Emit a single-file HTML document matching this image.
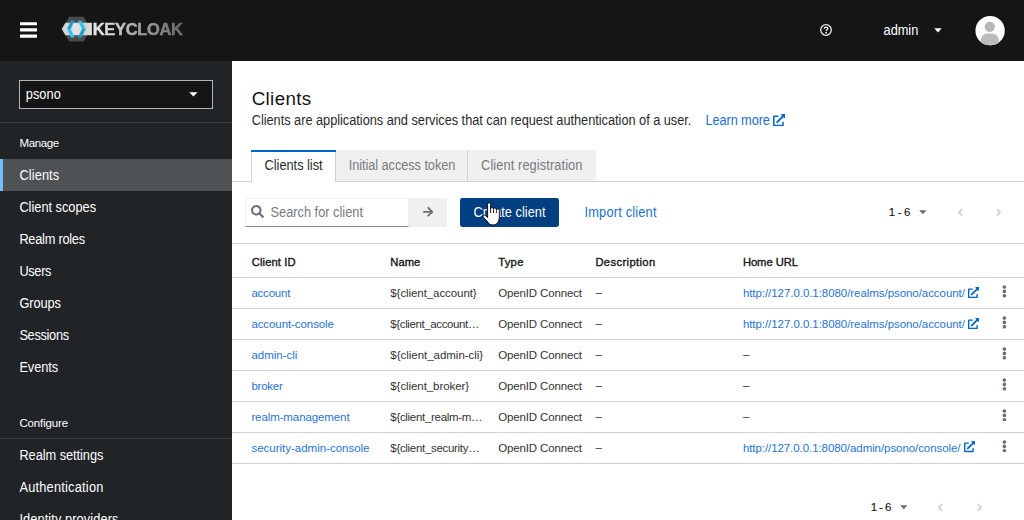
<!DOCTYPE html>
<html lang="en">
<head>
<meta charset="utf-8">
<title>Keycloak Administration Console</title>
<style>
html,body{margin:0;padding:0;}
body{width:1024px;height:520px;overflow:hidden;background:#fff;position:relative;font-family:"Liberation Sans",sans-serif;}
.abs,.t,svg{position:absolute;}
.t{white-space:pre;font-family:"Liberation Sans",sans-serif;}
#header{left:0;top:0;width:1024px;height:60.8px;background:#151515;}
#sidebar{left:0;top:60.8px;width:232px;height:460px;background:#212427;}
#realm{left:19px;top:80px;width:192px;height:26.5px;border:1px solid #b4b4b4;background:#151515;}
.hr{height:1px;background:#3c3f42;left:0;width:232px;}
#cur{left:0;top:158.7px;width:232px;height:31.9px;background:#4f5255;}
#curbar{left:0;top:158.8px;width:3.2px;height:31.8px;background:#73bcf7;}
.line{left:232px;width:792px;height:1px;background:#d2d2d2;}
.tab{top:150.4px;height:30.6px;background:#f0f0f0;box-sizing:border-box;border-right:1px solid #d2d2d2;}
</style>
</head>
<body>
<div id="header" class="abs"></div>
<div id="sidebar" class="abs"></div>
<div id="realm" class="abs"></div>
<div class="abs hr" style="top:122px"></div>
<div class="abs hr" style="top:437.6px"></div>
<div id="cur" class="abs"></div>
<div id="curbar" class="abs"></div>

<!-- hamburger -->
<svg style="left:20px;top:22px" width="17" height="17" viewBox="0 0 17 17"><g fill="#fff"><rect x="0" y="0.2" width="17" height="3.1" rx="0.5"/><rect x="0" y="6.3" width="17" height="3.1" rx="0.5"/><rect x="0" y="12.6" width="17" height="3.1" rx="0.5"/></g></svg>

<!-- logo -->
<svg style="left:58px;top:12px;will-change:transform" width="130" height="36" viewBox="58 12 130 36">
<defs>
<linearGradient id="gband" x1="61.7" x2="91.3" y1="0" y2="0" gradientUnits="userSpaceOnUse"><stop offset="0" stop-color="#cfcfcf"/><stop offset="0.5" stop-color="#e4e4e4"/><stop offset="0.8" stop-color="#d2d2d2"/><stop offset="1" stop-color="#e0e0e0"/></linearGradient>
<linearGradient id="gtext" x1="92" x2="183" y1="0" y2="0" gradientUnits="userSpaceOnUse"><stop offset="0" stop-color="#e8e8e8"/><stop offset="0.25" stop-color="#d0d0d0"/><stop offset="0.5" stop-color="#a4a4a4"/><stop offset="1" stop-color="#686868"/></linearGradient>
</defs>
<polygon points="69.15,16.7 83.55,16.7 90.75,29.15 83.55,41.6 69.15,41.6 61.95,29.15" fill="#4b4b4b"/>
<polygon points="61.7,29.05 65.4,22.8 91.9,22.8 91.9,35.3 65.4,35.3" fill="url(#gband)"/>
<polygon points="70.8,20.7 74.5,20.7 70.8,29.05 67.1,29.05" fill="#1d9fd0"/>
<polygon points="67.1,29.05 70.8,29.05 74.5,37.4 70.8,37.4" fill="#2fc3f2"/>
<polygon points="77.9,20.7 81.6,20.7 85.6,29.05 81.9,29.05" fill="#2fc3f2"/>
<polygon points="81.9,29.05 85.6,29.05 81.6,37.4 77.9,37.4" fill="#1d9fd0"/>
<text x="92.8" y="35" font-family="Liberation Sans, sans-serif" font-weight="700" font-size="16.5" textLength="90.2" lengthAdjust="spacing" fill="url(#gtext)" stroke="url(#gtext)" stroke-width="0.45">KEYCLOAK</text>
</svg>

<!-- help icon -->
<svg style="left:819px;top:23px" width="14" height="14" viewBox="0 0 14 14"><circle cx="7" cy="7" r="5.3" fill="none" stroke="#ededed" stroke-width="1.3"/><path d="M5.3 5.7c0-1 .8-1.6 1.8-1.6s1.7.6 1.7 1.5c0 1.2-1.6 1.2-1.6 2.4" fill="none" stroke="#fff" stroke-width="1.3"/><circle cx="7.1" cy="9.7" r="0.85" fill="#fff"/></svg>
<!-- admin caret -->
<svg style="left:933.5px;top:28px" width="8" height="5" viewBox="0 0 8 5"><path d="M0.3 0.2h7.4L4 4.4z" fill="#fff"/></svg>
<!-- avatar -->
<svg style="left:974.9px;top:16px" width="30" height="30" viewBox="0 0 30 30"><defs><clipPath id="av"><circle cx="15.1" cy="14.7" r="14.65"/></clipPath></defs><circle cx="15.1" cy="14.7" r="14.65" fill="#fff"/><g clip-path="url(#av)"><circle cx="14.8" cy="10.8" r="5.1" fill="#b7b7b7"/><path d="M5.600 30V26c0-5.400 2.800-8.600 7-8.600h4.400c4.200 0 7 3.200 7 8.600V30z" fill="#bcbcbc"/><path d="M9.600 30v-4.500M20 30v-4.500" stroke="#b0b0b0" stroke-width="0.8"/></g></svg>
<!-- realm caret -->
<svg style="left:189px;top:92px" width="9" height="5" viewBox="0 0 9 5"><path d="M0.3 0.2h8.2L4.4 4.6z" fill="#fff"/></svg>

<!-- tabs -->
<div class="abs line" style="top:180.6px"></div>
<div class="abs tab" style="left:335.8px;width:132.2px;"></div>
<div class="abs tab" style="left:468px;width:128px;border-right:none"></div>
<div class="abs" style="left:251px;top:150.4px;width:85px;height:31.4px;background:#fff;box-sizing:border-box;border-left:1px solid #d2d2d2;border-right:1px solid #d2d2d2;"></div>
<div class="abs" style="left:251px;top:150.2px;width:85px;height:2.2px;background:#0066cc"></div>

<!-- search -->
<div class="abs" style="left:245px;top:198.2px;width:164.4px;height:28.6px;box-sizing:border-box;border:1px solid #f0f0f0;border-bottom:1px solid #8a8d90;background:#fff"></div>
<div class="abs" style="left:409.4px;top:198.2px;width:37.4px;height:28.6px;background:#f0f0f0"></div>
<svg style="left:251px;top:205.4px" width="13" height="13" viewBox="0 0 512 512"><path fill="#6a6e73" d="M505 442.700L405.300 343c-4.500-4.500-10.600-7-17-7H372c27.600-35.300 44-79.700 44-128C416 93.100 322.900 0 208 0S0 93.100 0 208s93.100 208 208 208c48.300 0 92.700-16.400 128-44v16.300c0 6.400 2.500 12.500 7 17l99.700 99.700c9.400 9.400 24.600 9.400 33.900 0l28.300-28.300c9.400-9.400 9.400-24.600.1-34zM208 336c-70.700 0-128-57.200-128-128 0-70.700 57.200-128 128-128 70.700 0 128 57.200 128 128 0 70.700-57.200 128-128 128z"/></svg>
<svg style="left:422.4px;top:206.4px" width="12.4" height="11.6" viewBox="0 0 448 512"><path fill="#6a6e73" d="M190.500 66.900l22.200-22.200c9.400-9.400 24.600-9.400 33.900 0L441 239c9.400 9.400 9.400 24.600 0 33.900L246.600 467.300c-9.400 9.400-24.600 9.400-33.900 0l-22.200-22.200c-9.500-9.500-9.300-25 .4-34.300L311.400 296H24c-13.300 0-24-10.700-24-24v-32c0-13.300 10.700-24 24-24h287.400L190.900 101.200c-9.800-9.300-10-24.800-.4-34.300z"/></svg>

<!-- create button -->
<div class="abs" style="left:460px;top:198.2px;width:99.2px;height:28.8px;background:#004080;border-radius:2.4px"></div>

<!-- pagination top -->
<svg style="left:918.8px;top:209.8px" width="8" height="5" viewBox="0 0 8 5"><path d="M0.1 0.3h7.4L3.8 4.2z" fill="#6a6e73"/></svg>
<svg style="left:957px;top:207.6px" width="7" height="9" viewBox="0 0 7 9"><path d="M5.1 1.2L1.9 4.4l3.2 3.2" fill="none" stroke="#d2d2d2" stroke-width="1.9"/></svg>
<svg style="left:995px;top:207.6px" width="7" height="9" viewBox="0 0 7 9"><path d="M1.9 1.2l3.2 3.2-3.2 3.2" fill="none" stroke="#d2d2d2" stroke-width="1.9"/></svg>
<!-- pagination bottom -->
<svg style="left:899.6px;top:504.8px" width="8" height="5" viewBox="0 0 8 5"><path d="M0.1 0.3h7.4L3.8 4.2z" fill="#6a6e73"/></svg>
<svg style="left:937px;top:502.6px" width="7" height="9" viewBox="0 0 7 9"><path d="M5.1 1.2L1.9 4.4l3.2 3.2" fill="none" stroke="#d2d2d2" stroke-width="1.9"/></svg>
<svg style="left:976px;top:502.6px" width="7" height="9" viewBox="0 0 7 9"><path d="M1.9 1.2l3.2 3.2-3.2 3.2" fill="none" stroke="#d2d2d2" stroke-width="1.9"/></svg>

<!-- table lines -->
<div class="abs line" style="top:242.6px"></div>
<div class="abs line" style="top:277.2px"></div>
<div class="abs line" style="top:308.1px"></div>
<div class="abs line" style="top:339.0px"></div>
<div class="abs line" style="top:369.9px"></div>
<div class="abs line" style="top:400.8px"></div>
<div class="abs line" style="top:431.7px"></div>
<div class="abs line" style="top:462.6px"></div>

<svg style="left:772.9px;top:114.1px" width="12.3" height="12.3" viewBox="0 0 512 512"><path fill="#0066cc" d="M432,320H400a16,16,0,0,0-16,16V448H64V128H208a16,16,0,0,0,16-16V80a16,16,0,0,0-16-16H48A48,48,0,0,0,0,112V464a48,48,0,0,0,48,48H400a48,48,0,0,0,48-48V336A16,16,0,0,0,432,320ZM488,0h-128c-21.370,0-32.050,25.910-17,41l35.730,35.730L135,320.370a24,24,0,0,0,0,34L157.670,377a24,24,0,0,0,34,0L435.280,133.320,471,169c15,15,41,4.500,41-17V24A24,24,0,0,0,488,0Z"/></svg>
<svg style="left:967.8px;top:286.9px" width="11.2" height="11.2" viewBox="0 0 512 512"><path fill="#0066cc" d="M432,320H400a16,16,0,0,0-16,16V448H64V128H208a16,16,0,0,0,16-16V80a16,16,0,0,0-16-16H48A48,48,0,0,0,0,112V464a48,48,0,0,0,48,48H400a48,48,0,0,0,48-48V336A16,16,0,0,0,432,320ZM488,0h-128c-21.370,0-32.050,25.910-17,41l35.730,35.730L135,320.370a24,24,0,0,0,0,34L157.670,377a24,24,0,0,0,34,0L435.280,133.320,471,169c15,15,41,4.500,41-17V24A24,24,0,0,0,488,0Z"/></svg>
<svg style="left:967.8px;top:317.8px" width="11.2" height="11.2" viewBox="0 0 512 512"><path fill="#0066cc" d="M432,320H400a16,16,0,0,0-16,16V448H64V128H208a16,16,0,0,0,16-16V80a16,16,0,0,0-16-16H48A48,48,0,0,0,0,112V464a48,48,0,0,0,48,48H400a48,48,0,0,0,48-48V336A16,16,0,0,0,432,320ZM488,0h-128c-21.370,0-32.050,25.910-17,41l35.730,35.730L135,320.370a24,24,0,0,0,0,34L157.670,377a24,24,0,0,0,34,0L435.280,133.320,471,169c15,15,41,4.500,41-17V24A24,24,0,0,0,488,0Z"/></svg>
<svg style="left:964.0px;top:441.4px" width="11.2" height="11.2" viewBox="0 0 512 512"><path fill="#0066cc" d="M432,320H400a16,16,0,0,0-16,16V448H64V128H208a16,16,0,0,0,16-16V80a16,16,0,0,0-16-16H48A48,48,0,0,0,0,112V464a48,48,0,0,0,48,48H400a48,48,0,0,0,48-48V336A16,16,0,0,0,432,320ZM488,0h-128c-21.370,0-32.050,25.910-17,41l35.730,35.730L135,320.370a24,24,0,0,0,0,34L157.670,377a24,24,0,0,0,34,0L435.280,133.320,471,169c15,15,41,4.500,41-17V24A24,24,0,0,0,488,0Z"/></svg>
<svg style="left:1002.2px;top:285.1px" width="4.8" height="12.8" viewBox="0 0 192 512"><path fill="#6a6e73" d="M96 184c39.800 0 72 32.200 72 72s-32.200 72-72 72-72-32.200-72-72 32.200-72 72-72zM24 80c0 39.800 32.200 72 72 72s72-32.200 72-72S135.800 8 96 8 24 40.200 24 80zm0 352c0 39.800 32.200 72 72 72s72-32.200 72-72-32.200-72-72-72-72 32.200-72 72z"/></svg>
<svg style="left:1002.2px;top:316.0px" width="4.8" height="12.8" viewBox="0 0 192 512"><path fill="#6a6e73" d="M96 184c39.800 0 72 32.200 72 72s-32.200 72-72 72-72-32.200-72-72 32.200-72 72-72zM24 80c0 39.800 32.200 72 72 72s72-32.200 72-72S135.800 8 96 8 24 40.200 24 80zm0 352c0 39.800 32.200 72 72 72s72-32.200 72-72-32.200-72-72-72-72 32.200-72 72z"/></svg>
<svg style="left:1002.2px;top:346.9px" width="4.8" height="12.8" viewBox="0 0 192 512"><path fill="#6a6e73" d="M96 184c39.800 0 72 32.200 72 72s-32.200 72-72 72-72-32.200-72-72 32.200-72 72-72zM24 80c0 39.800 32.200 72 72 72s72-32.200 72-72S135.800 8 96 8 24 40.200 24 80zm0 352c0 39.800 32.200 72 72 72s72-32.200 72-72-32.200-72-72-72-72 32.200-72 72z"/></svg>
<svg style="left:1002.2px;top:377.8px" width="4.8" height="12.8" viewBox="0 0 192 512"><path fill="#6a6e73" d="M96 184c39.800 0 72 32.200 72 72s-32.200 72-72 72-72-32.200-72-72 32.200-72 72-72zM24 80c0 39.800 32.200 72 72 72s72-32.200 72-72S135.800 8 96 8 24 40.200 24 80zm0 352c0 39.800 32.200 72 72 72s72-32.200 72-72-32.200-72-72-72-72 32.200-72 72z"/></svg>
<svg style="left:1002.2px;top:408.7px" width="4.8" height="12.8" viewBox="0 0 192 512"><path fill="#6a6e73" d="M96 184c39.800 0 72 32.200 72 72s-32.200 72-72 72-72-32.200-72-72 32.200-72 72-72zM24 80c0 39.800 32.200 72 72 72s72-32.200 72-72S135.800 8 96 8 24 40.200 24 80zm0 352c0 39.800 32.200 72 72 72s72-32.200 72-72-32.200-72-72-72-72 32.200-72 72z"/></svg>
<svg style="left:1002.2px;top:439.6px" width="4.8" height="12.8" viewBox="0 0 192 512"><path fill="#6a6e73" d="M96 184c39.800 0 72 32.200 72 72s-32.200 72-72 72-72-32.200-72-72 32.200-72 72-72zM24 80c0 39.800 32.200 72 72 72s72-32.200 72-72S135.800 8 96 8 24 40.200 24 80zm0 352c0 39.800 32.200 72 72 72s72-32.200 72-72-32.200-72-72-72-72 32.200-72 72z"/></svg>
<span class="t" style="left:883.6px;top:21.0px;font-size:12.8px;line-height:19px;letter-spacing:-0.040px;color:#fff;transform:scaleY(1.08);transform-origin:0 14.0px;">admin</span>
<span class="t" style="left:25.7px;top:85.0px;font-size:12.8px;line-height:19px;letter-spacing:0.081px;color:#fff;transform:scaleY(1.08);transform-origin:0 14.0px;">psono</span>
<span class="t" style="left:19.6px;top:134.5px;font-size:11.5px;line-height:17px;letter-spacing:-0.412px;color:#fff;">Manage</span>
<span class="t" style="left:19.4px;top:166.0px;font-size:12.8px;line-height:19px;letter-spacing:0.112px;color:#fff;transform:scaleY(1.08);transform-origin:0 14.0px;">Clients</span>
<span class="t" style="left:19.4px;top:198.0px;font-size:12.8px;line-height:19px;letter-spacing:-0.011px;color:#fff;transform:scaleY(1.08);transform-origin:0 14.0px;">Client scopes</span>
<span class="t" style="left:19.4px;top:230.0px;font-size:12.8px;line-height:19px;letter-spacing:-0.258px;color:#fff;transform:scaleY(1.08);transform-origin:0 14.0px;">Realm roles</span>
<span class="t" style="left:19.4px;top:262.0px;font-size:12.8px;line-height:19px;letter-spacing:-0.330px;color:#fff;transform:scaleY(1.08);transform-origin:0 14.0px;">Users</span>
<span class="t" style="left:19.4px;top:294.0px;font-size:12.8px;line-height:19px;letter-spacing:-0.074px;color:#fff;transform:scaleY(1.08);transform-origin:0 14.0px;">Groups</span>
<span class="t" style="left:19.4px;top:326.0px;font-size:12.8px;line-height:19px;letter-spacing:-0.320px;color:#fff;transform:scaleY(1.08);transform-origin:0 14.0px;">Sessions</span>
<span class="t" style="left:19.4px;top:358.0px;font-size:12.8px;line-height:19px;letter-spacing:-0.085px;color:#fff;transform:scaleY(1.08);transform-origin:0 14.0px;">Events</span>
<span class="t" style="left:19.4px;top:414.5px;font-size:11.5px;line-height:17px;letter-spacing:-0.134px;color:#fff;">Configure</span>
<span class="t" style="left:19.4px;top:446.0px;font-size:12.8px;line-height:19px;letter-spacing:-0.049px;color:#fff;transform:scaleY(1.08);transform-origin:0 14.0px;">Realm settings</span>
<span class="t" style="left:19.4px;top:478.0px;font-size:12.8px;line-height:19px;letter-spacing:0.222px;color:#fff;transform:scaleY(1.08);transform-origin:0 14.0px;">Authentication</span>
<span class="t" style="left:19.4px;top:510.0px;font-size:12.8px;line-height:19px;letter-spacing:0.091px;color:#fff;transform:scaleY(1.08);transform-origin:0 14.0px;">Identity providers</span>
<span class="t" style="left:251.7px;top:84.5px;font-size:18.8px;line-height:28px;letter-spacing:0.346px;color:#151515;">Clients</span>
<span class="t" style="left:251.7px;top:111.0px;font-size:12.8px;line-height:19px;letter-spacing:-0.035px;color:#2b2b2b;transform:scaleY(1.08);transform-origin:0 14.0px;">Clients are applications and services that can request authentication of a user.</span>
<span class="t" style="left:705.5px;top:111.0px;font-size:12.8px;line-height:19px;letter-spacing:-0.117px;color:#1a70cf;transform:scaleY(1.08);transform-origin:0 14.0px;">Learn more</span>
<span class="t" style="left:264.6px;top:156.0px;font-size:12.8px;line-height:19px;letter-spacing:-0.028px;color:#2b2b2b;transform:scaleY(1.08);transform-origin:0 14.0px;">Clients list</span>
<span class="t" style="left:348.7px;top:156.0px;font-size:12.8px;line-height:19px;letter-spacing:-0.075px;color:#777b80;transform:scaleY(1.08);transform-origin:0 14.0px;">Initial access token</span>
<span class="t" style="left:481.1px;top:156.0px;font-size:12.8px;line-height:19px;letter-spacing:0.096px;color:#777b80;transform:scaleY(1.08);transform-origin:0 14.0px;">Client registration</span>
<span class="t" style="left:270.5px;top:203.0px;font-size:12.8px;line-height:19px;letter-spacing:0.002px;color:#777b80;transform:scaleY(1.08);transform-origin:0 14.0px;">Search for client</span>
<span class="t" style="left:473.5px;top:203.0px;font-size:12.8px;line-height:19px;letter-spacing:0.013px;color:#fff;transform:scaleY(1.08);transform-origin:0 14.0px;">Create client</span>
<span class="t" style="left:584.5px;top:203.0px;font-size:12.8px;line-height:19px;letter-spacing:0.191px;color:#1a70cf;transform:scaleY(1.08);transform-origin:0 14.0px;">Import client</span>
<span class="t" style="left:888.8px;top:203.5px;font-size:11.5px;line-height:17px;letter-spacing:-0.354px;color:#151515;-webkit-text-stroke:0.12px #151515;">1 - 6</span>
<span class="t" style="left:870.7px;top:498.5px;font-size:11.5px;line-height:17px;letter-spacing:-0.579px;color:#151515;-webkit-text-stroke:0.12px #151515;">1 - 6</span>
<span class="t" style="left:251.7px;top:253.5px;font-size:11.2px;line-height:17px;letter-spacing:0.137px;color:#151515;-webkit-text-stroke:0.35px #151515;">Client ID</span>
<span class="t" style="left:390.3px;top:253.5px;font-size:11.2px;line-height:17px;letter-spacing:0.019px;color:#151515;-webkit-text-stroke:0.35px #151515;">Name</span>
<span class="t" style="left:498.2px;top:253.5px;font-size:11.2px;line-height:17px;letter-spacing:0.311px;color:#151515;-webkit-text-stroke:0.35px #151515;">Type</span>
<span class="t" style="left:595.4px;top:253.5px;font-size:11.2px;line-height:17px;letter-spacing:0.383px;color:#151515;-webkit-text-stroke:0.35px #151515;">Description</span>
<span class="t" style="left:742.9px;top:253.5px;font-size:11.2px;line-height:17px;letter-spacing:-0.035px;color:#151515;-webkit-text-stroke:0.35px #151515;">Home URL</span>
<span class="t" style="left:251.4px;top:284.5px;font-size:11.5px;line-height:17px;letter-spacing:-0.214px;color:#1f74d1;">account</span>
<span class="t" style="left:390.3px;top:284.5px;font-size:11.5px;line-height:17px;letter-spacing:-0.076px;color:#333;">${client_account}</span>
<span class="t" style="left:498.2px;top:284.5px;font-size:11.5px;line-height:17px;letter-spacing:-0.144px;color:#333;">OpenID Connect</span>
<span class="t" style="left:595.4px;top:283.5px;font-size:11.5px;line-height:17px;letter-spacing:0.000px;color:#333;">–</span>
<span class="t" style="left:742.9px;top:284.5px;font-size:11.5px;line-height:17px;letter-spacing:-0.057px;color:#1f74d1;">http://127.0.0.1:8080/realms/psono/account/</span>
<span class="t" style="left:251.4px;top:315.5px;font-size:11.5px;line-height:17px;letter-spacing:-0.082px;color:#1f74d1;">account-console</span>
<span class="t" style="left:390.3px;top:315.5px;font-size:11.5px;line-height:17px;letter-spacing:-0.385px;color:#333;">${client_account…</span>
<span class="t" style="left:498.2px;top:315.5px;font-size:11.5px;line-height:17px;letter-spacing:-0.144px;color:#333;">OpenID Connect</span>
<span class="t" style="left:595.4px;top:314.5px;font-size:11.5px;line-height:17px;letter-spacing:0.000px;color:#333;">–</span>
<span class="t" style="left:742.9px;top:315.5px;font-size:11.5px;line-height:17px;letter-spacing:-0.057px;color:#1f74d1;">http://127.0.0.1:8080/realms/psono/account/</span>
<span class="t" style="left:251.4px;top:346.5px;font-size:11.5px;line-height:17px;letter-spacing:-0.002px;color:#1f74d1;">admin-cli</span>
<span class="t" style="left:390.3px;top:346.5px;font-size:11.5px;line-height:17px;letter-spacing:-0.025px;color:#333;">${client_admin-cli}</span>
<span class="t" style="left:498.2px;top:346.5px;font-size:11.5px;line-height:17px;letter-spacing:-0.144px;color:#333;">OpenID Connect</span>
<span class="t" style="left:595.4px;top:345.5px;font-size:11.5px;line-height:17px;letter-spacing:0.000px;color:#333;">–</span>
<span class="t" style="left:742.9px;top:345.5px;font-size:11.5px;line-height:17px;letter-spacing:0.000px;color:#333;">–</span>
<span class="t" style="left:251.4px;top:377.5px;font-size:11.5px;line-height:17px;letter-spacing:-0.242px;color:#1f74d1;">broker</span>
<span class="t" style="left:390.3px;top:377.5px;font-size:11.5px;line-height:17px;letter-spacing:-0.075px;color:#333;">${client_broker}</span>
<span class="t" style="left:498.2px;top:377.5px;font-size:11.5px;line-height:17px;letter-spacing:-0.144px;color:#333;">OpenID Connect</span>
<span class="t" style="left:595.4px;top:376.5px;font-size:11.5px;line-height:17px;letter-spacing:0.000px;color:#333;">–</span>
<span class="t" style="left:742.9px;top:376.5px;font-size:11.5px;line-height:17px;letter-spacing:0.000px;color:#333;">–</span>
<span class="t" style="left:251.4px;top:408.5px;font-size:11.5px;line-height:17px;letter-spacing:-0.101px;color:#1f74d1;">realm-management</span>
<span class="t" style="left:390.3px;top:408.5px;font-size:11.5px;line-height:17px;letter-spacing:-0.304px;color:#333;">${client_realm-m…</span>
<span class="t" style="left:498.2px;top:408.5px;font-size:11.5px;line-height:17px;letter-spacing:-0.144px;color:#333;">OpenID Connect</span>
<span class="t" style="left:595.4px;top:407.5px;font-size:11.5px;line-height:17px;letter-spacing:0.000px;color:#333;">–</span>
<span class="t" style="left:742.9px;top:407.5px;font-size:11.5px;line-height:17px;letter-spacing:0.000px;color:#333;">–</span>
<span class="t" style="left:251.4px;top:439.5px;font-size:11.5px;line-height:17px;letter-spacing:-0.007px;color:#1f74d1;">security-admin-console</span>
<span class="t" style="left:390.3px;top:439.5px;font-size:11.5px;line-height:17px;letter-spacing:-0.306px;color:#333;">${client_security…</span>
<span class="t" style="left:498.2px;top:439.5px;font-size:11.5px;line-height:17px;letter-spacing:-0.144px;color:#333;">OpenID Connect</span>
<span class="t" style="left:595.4px;top:438.5px;font-size:11.5px;line-height:17px;letter-spacing:0.000px;color:#333;">–</span>
<span class="t" style="left:742.9px;top:439.5px;font-size:11.5px;line-height:17px;letter-spacing:-0.073px;color:#1f74d1;">http://127.0.0.1:8080/admin/psono/console/</span>
<svg style="left:481px;top:200px" width="21" height="27" viewBox="481 200 21 27">
<path d="M487.6 204.2a1.5 1.5 0 0 1 3 0V209.2a1.45 1.45 0 0 1 2.9 -0.400v0.600a1.450 1.450 0 0 1 2.900 0v0.800a1.450 1.450 0 0 1 2.900 0.100V217.500c0 3.500 -1.500 5.400 -3.300 6.800c-1.800 0.800 -4.700 0.800 -6.200 0c-1.500 -1.200 -2.200 -2.700 -3.400 -4.100L483.500 217.400c-1 -1.300 0.500 -2.800 1.900 -1.800L487.600 217.500Z" fill="#fff" stroke="#000" stroke-width="0.9" stroke-linejoin="round"/>
<path d="M490.600 209.200v3.800M493.500 209.800v3.200M496.400 210.400v2.600" stroke="#000" stroke-width="0.9" fill="none"/>
</svg>
</body>
</html>
